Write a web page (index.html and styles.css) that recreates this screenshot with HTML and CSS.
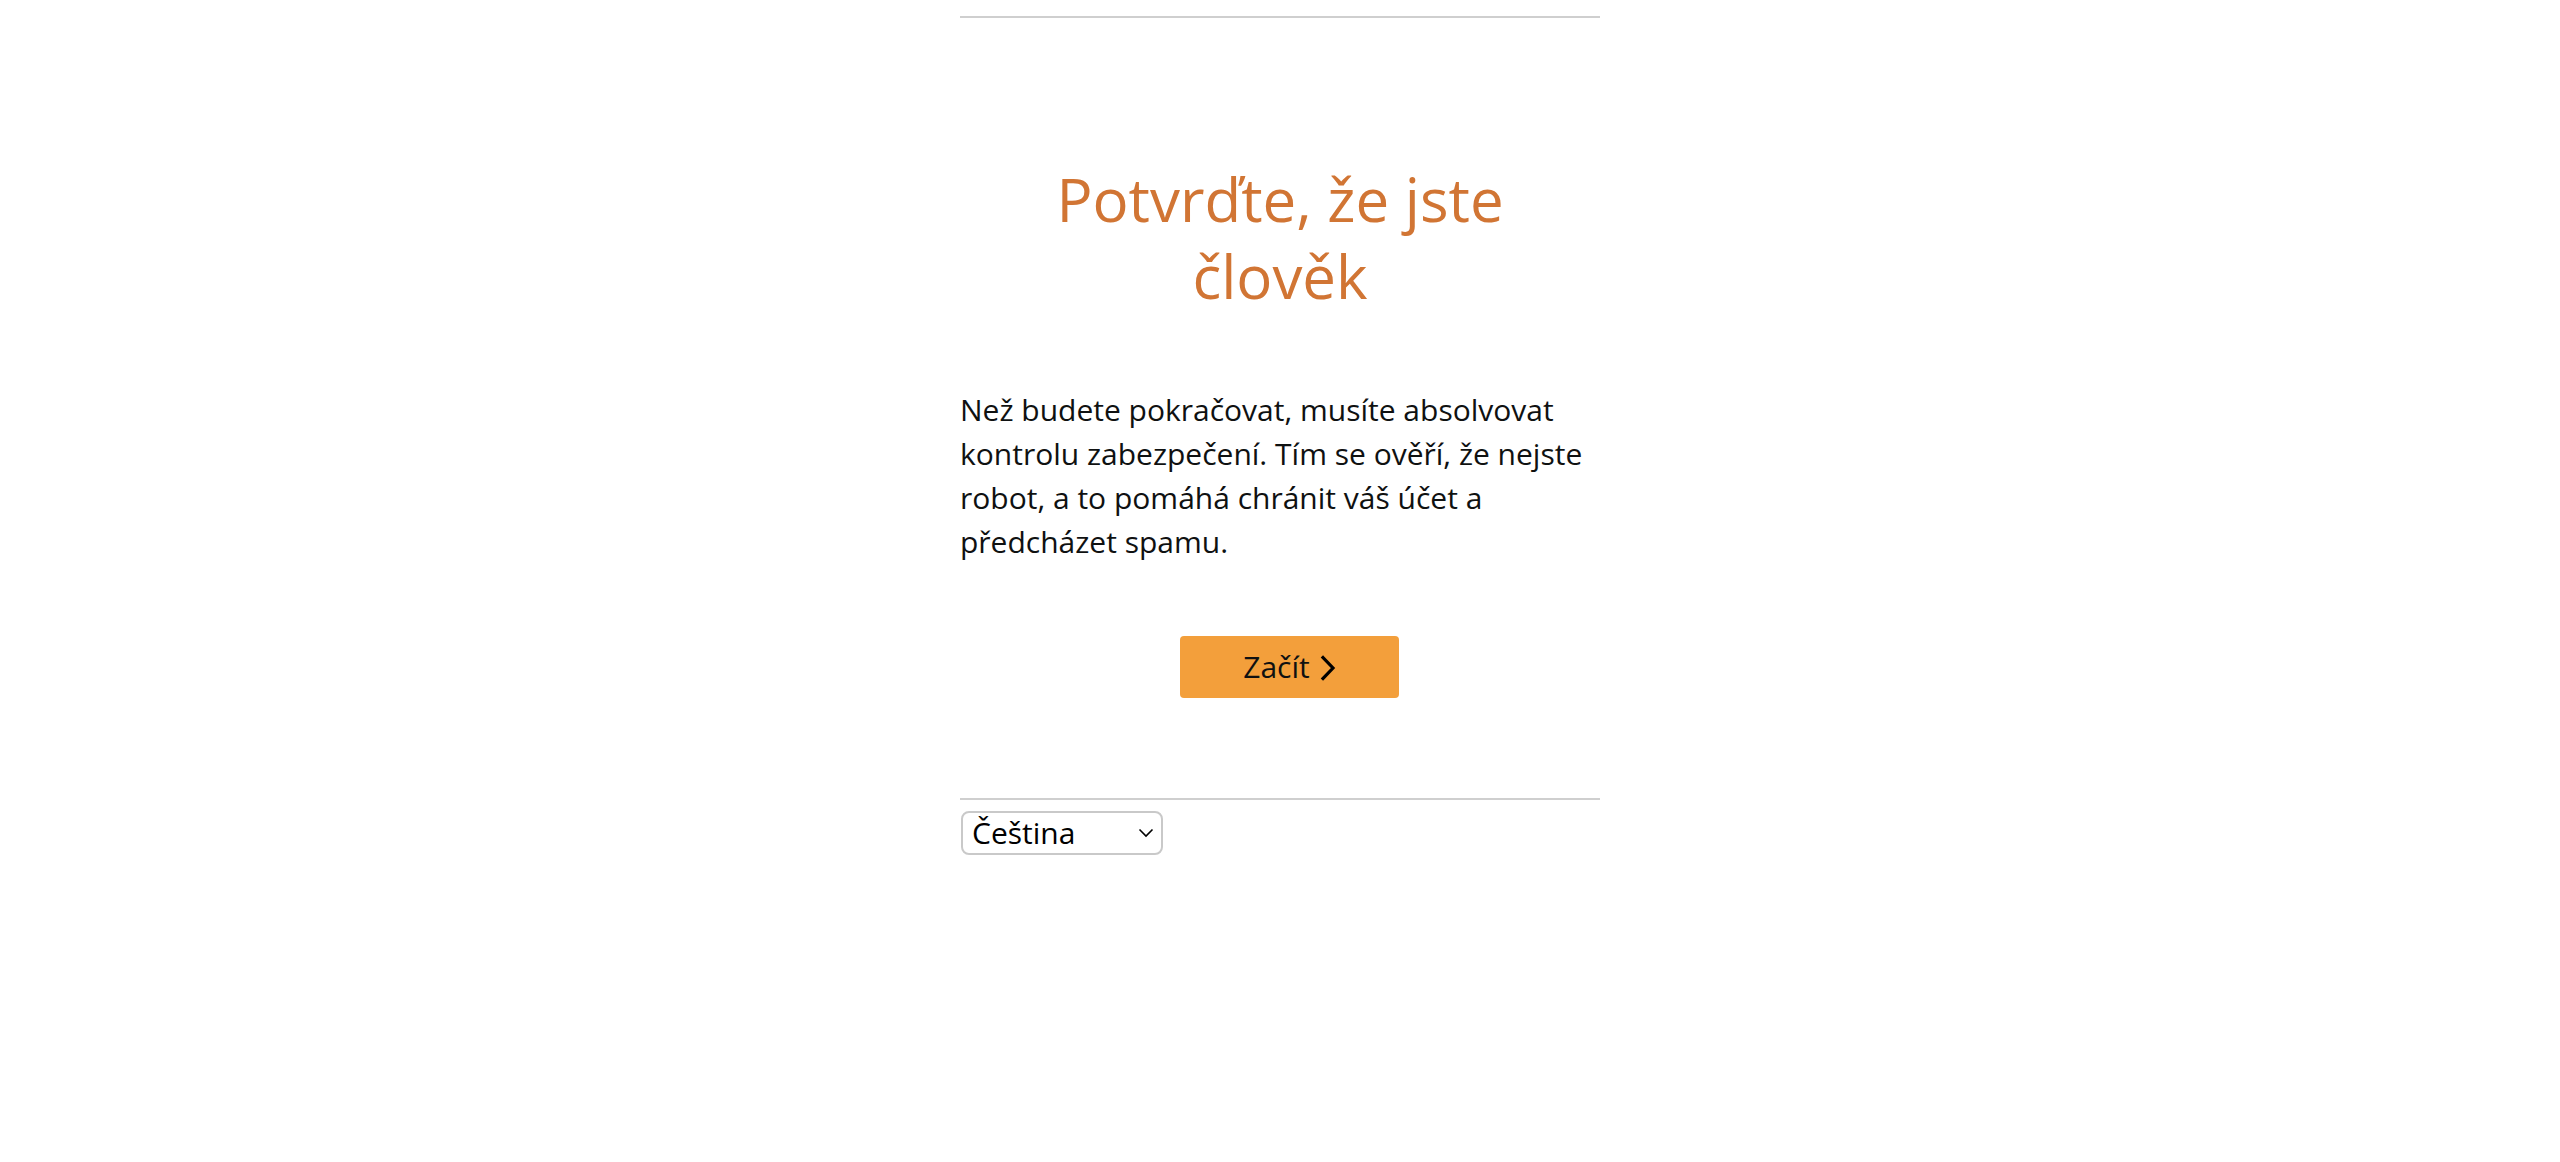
FILE: index.html
```html
<!DOCTYPE html>
<html lang="cs">
<head>
<meta charset="utf-8">
<title>Potvrďte, že jste člověk</title>
<link rel="stylesheet" href="styles.css">
</head>
<body>
<div class="page">
  <hr class="rule rule-top">
  <h1 class="title">Potvrďte, že jste člověk</h1>
  <p class="intro">Než budete pokračovat, musíte absolvovat kontrolu zabezpečení. Tím se ověří, že nejste robot, a to pomáhá chránit váš účet a předcházet spamu.</p>
  <div class="actions">
    <button class="start-btn" type="button">
      <span>Začít</span>
      <svg class="chev" width="16" height="26" viewBox="0 0 16 26" aria-hidden="true"><path d="M3 2.5 L13 13 L3 23.5" fill="none" stroke="#000" stroke-width="3.2" stroke-linecap="square" stroke-linejoin="miter"/></svg>
    </button>
  </div>
  <hr class="rule rule-bottom">
  <div class="lang">
    <span class="select-wrap">
      <select class="lang-select" aria-label="Jazyk">
        <option>Čeština</option>
        <option>English</option>
      </select>
      <svg class="select-arrow" width="16" height="10" viewBox="0 0 16 10" aria-hidden="true"><path d="M1.5 1.5 L8 8 L14.5 1.5" fill="none" stroke="#000" stroke-width="1.6"/></svg>
    </span>
  </div>
</div>
</body>
</html>
```
FILE: styles.css
```css
html, body {
  margin: 0;
  padding: 0;
  background: #fff;
}

body {
  font-family: "Open Sans", "Noto Sans", Arial, sans-serif;
  color: #0f1111;
}

.page {
  width: 640px;
  margin: 0 auto;
  display: flex;
  flex-direction: column;
}

.rule {
  border: 0;
  border-top: 2px solid #cfcfcf;
  height: 0;
  margin: 0;
}

.rule-top {
  margin-top: 16px;
}

.title {
  margin: 143px 0 0;
  padding: 0 60px;
  font-size: 60px;
  line-height: 77px;
  font-weight: 400;
  color: #d17534;
  text-align: center;
}

.intro {
  margin: 73px 0 0;
  font-size: 30px;
  line-height: 44px;
  color: #0f1111;
}

.actions {
  margin-top: 72px;
  display: flex;
  justify-content: center;
  padding-left: 19px;
}

.start-btn {
  width: 219px;
  height: 62px;
  padding: 0;
  border: 0;
  border-radius: 4px;
  background: #f39f3b;
  color: #0f1111;
  font-family: inherit;
  font-size: 30px;
  line-height: 44px;
  display: flex;
  align-items: center;
  justify-content: center;
  gap: 10px;
  cursor: pointer;
}

.chev {
  display: block;
  margin-top: 1px;
}

.rule-bottom {
  margin-top: 100px;
}

.lang {
  margin-top: 11px;
  display: flex;
}

.select-wrap {
  position: relative;
  display: inline-block;
}

.lang-select {
  appearance: none;
  -webkit-appearance: none;
  width: 202px;
  height: 44px;
  margin: 0 0 0 1px;
  padding: 0 30px 0 9px;
  border: 2px solid #c9c9c9;
  border-radius: 8px;
  background: #fff;
  color: #000;
  font-family: inherit;
  font-size: 30px;
  line-height: 40px;
}

.select-arrow {
  position: absolute;
  right: 9px;
  top: 17px;
  pointer-events: none;
}
```
